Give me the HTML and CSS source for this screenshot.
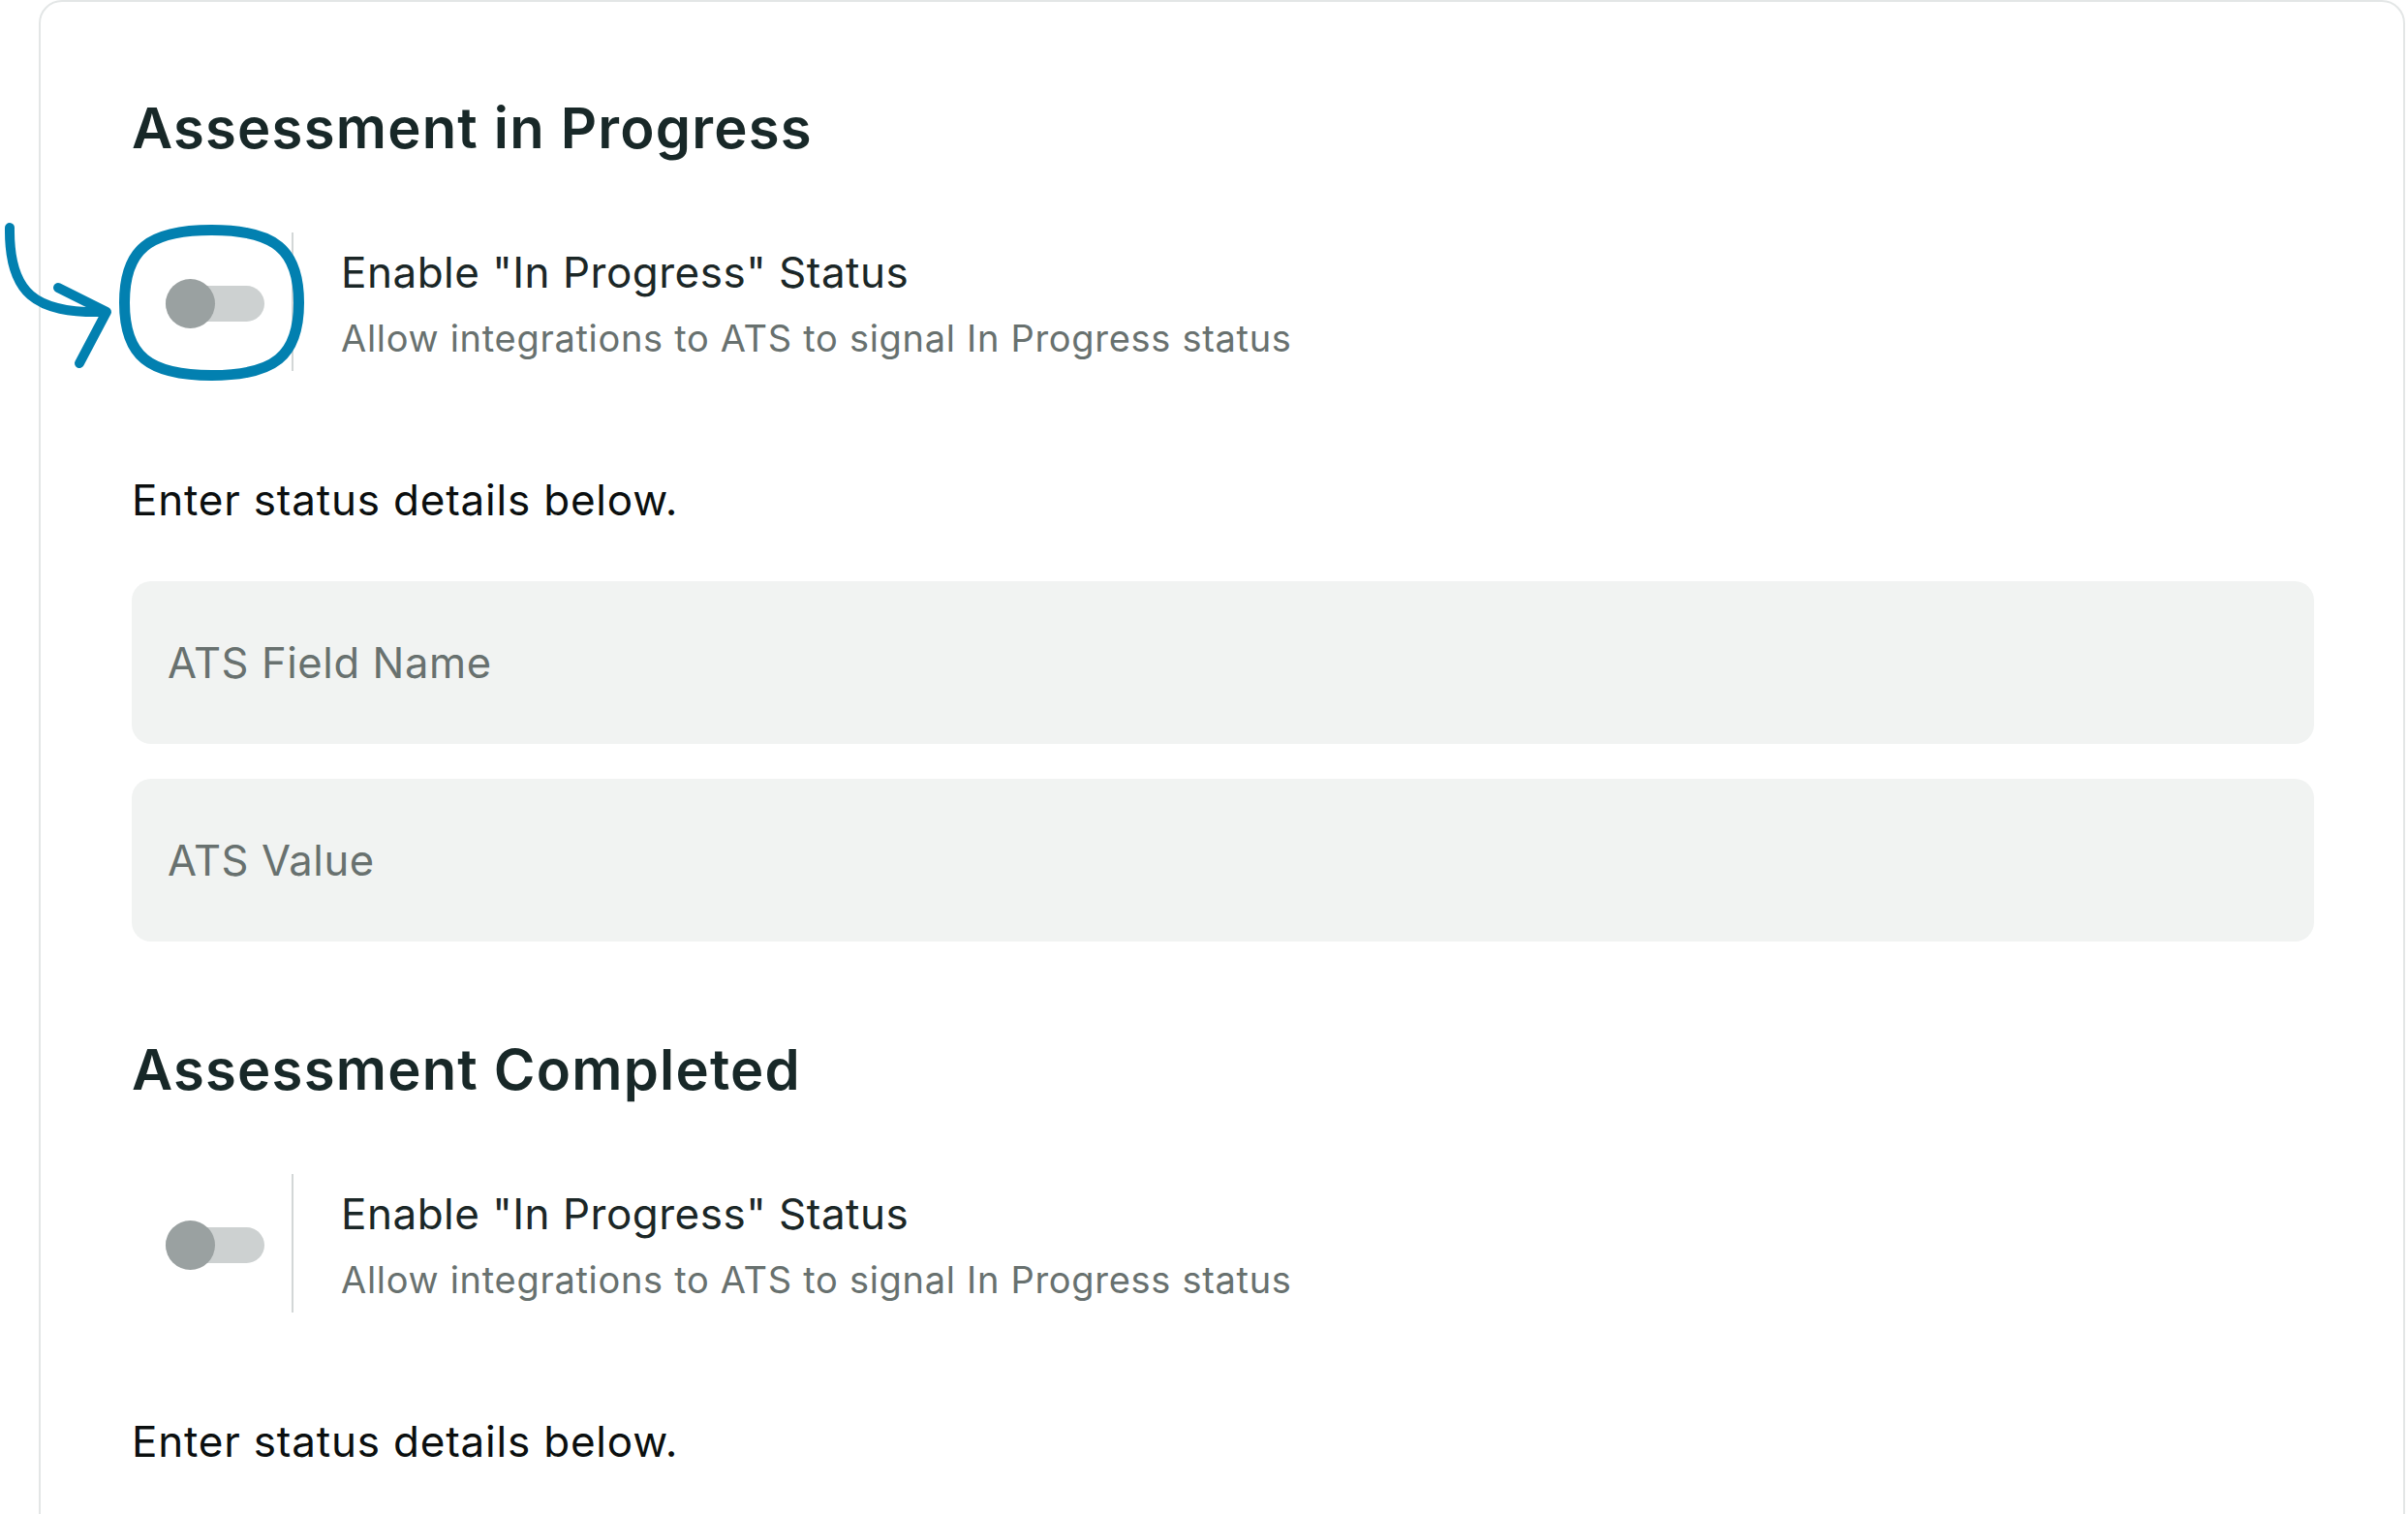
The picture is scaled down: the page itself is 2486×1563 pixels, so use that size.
FILE: index.html
```html
<!DOCTYPE html>
<html lang="en">
<head>
<meta charset="utf-8">
<title>ATS Status Settings</title>
<link rel="stylesheet" href="styles.css">
</head>
<body>
<div class="card">
  <section class="section">
    <h2 class="section-title">Assessment in Progress</h2>
    <div class="toggle-row">
      <div class="switch-wrap">
        <span class="switch"><span class="knob"></span></span>
      </div>
      <div class="divider"></div>
      <div class="toggle-text">
        <div class="toggle-title">Enable "In Progress" Status</div>
        <div class="toggle-sub">Allow integrations to ATS to signal In Progress status</div>
      </div>
      <svg class="annotation" width="320" height="170" viewBox="0 0 320 170" aria-hidden="true">
        <path d="M218.5 12.5 C 283 12.5, 308.5 32, 308.5 87.5 C 308.5 143, 283 162.5, 218.5 162.5 C 154 162.5, 128.5 143, 128.5 87.5 C 128.5 32, 154 12.5, 218.5 12.5 Z" fill="none" stroke="#0280b0" stroke-width="11"/>
        <path d="M10 10 C 9 78, 36 99, 108 97" fill="none" stroke="#0280b0" stroke-width="10" stroke-linecap="round"/>
        <path d="M60 72 L 110 97 L 82 150" fill="none" stroke="#0280b0" stroke-width="10" stroke-linecap="round" stroke-linejoin="round"/>
      </svg>
    </div>
    <p class="hint">Enter status details below.</p>
    <div class="fields">
      <input class="field" type="text" placeholder="ATS Field Name">
      <input class="field" type="text" placeholder="ATS Value">
    </div>
  </section>

  <section class="section">
    <h2 class="section-title">Assessment Completed</h2>
    <div class="toggle-row">
      <div class="switch-wrap">
        <span class="switch"><span class="knob"></span></span>
      </div>
      <div class="divider"></div>
      <div class="toggle-text">
        <div class="toggle-title">Enable "In Progress" Status</div>
        <div class="toggle-sub">Allow integrations to ATS to signal In Progress status</div>
      </div>
    </div>
    <p class="hint">Enter status details below.</p>
    <div class="fields">
      <input class="field" type="text" placeholder="ATS Field Name">
      <input class="field" type="text" placeholder="ATS Value">
    </div>
  </section>
</div>
</body>
</html>
```
FILE: styles.css
```css
html, body {
  margin: 0;
  padding: 0;
  background: #ffffff;
}

body {
  font-family: Inter, "Noto Sans", "Liberation Sans", sans-serif;
  color: #1b2727;
  overflow: hidden;
}

.card {
  margin-left: 40px;
  width: 2443px;
  box-sizing: border-box;
  border: 2px solid #e3e6e6;
  border-radius: 24px;
  padding: 95px 92px 200px 94px;
  display: flex;
  flex-direction: column;
  gap: 97px;
}

.section {
  display: flex;
  flex-direction: column;
}

.section-title {
  margin: 0;
  font-size: 58px;
  line-height: 70px;
  font-weight: 600;
  color: #182828;
  letter-spacing: 1.2px;
}

.toggle-row {
  position: relative;
  margin-top: 73px;
  height: 143px;
  display: flex;
  align-items: center;
}

.switch-wrap {
  width: 165px;
  box-sizing: border-box;
  padding-left: 35px;
  padding-top: 3px;
  display: flex;
  align-items: center;
}

.switch {
  position: relative;
  width: 102px;
  height: 37px;
  border-radius: 19px;
  background: #cdd1d1;
  display: block;
}

.knob {
  position: absolute;
  left: 0;
  top: -7px;
  width: 51px;
  height: 51px;
  border-radius: 50%;
  background: #9aa1a1;
}

.divider {
  align-self: stretch;
  width: 2px;
  background: #d3d7d7;
}

.toggle-text {
  margin-left: 49px;
  padding-top: 5px;
  display: flex;
  flex-direction: column;
}

.toggle-title {
  font-size: 44px;
  line-height: 52px;
  letter-spacing: 0.5px;
  color: #1b2727;
}

.toggle-sub {
  margin-top: 18px;
  font-size: 38px;
  line-height: 48px;
  letter-spacing: 0.7px;
  color: #68716f;
}

.annotation {
  position: absolute;
  left: -136px;
  top: -15px;
  overflow: visible;
}

.hint {
  margin: 107px 0 0 0;
  font-size: 44px;
  line-height: 52px;
  font-weight: 400;
  letter-spacing: 0.8px;
  color: #0b0f0f;
}

.fields {
  margin-top: 58px;
  display: flex;
  flex-direction: column;
  gap: 36px;
}

.field {
  display: block;
  width: 100%;
  height: 168px;
  box-sizing: border-box;
  border: none;
  outline: none;
  border-radius: 20px;
  background: #f1f3f2;
  padding: 0 37px;
  font-family: Inter, "Noto Sans", "Liberation Sans", sans-serif;
  font-size: 43.5px;
  letter-spacing: 0.6px;
  color: #1b2727;
}

.field::placeholder {
  color: #68716f;
  opacity: 1;
}
```
